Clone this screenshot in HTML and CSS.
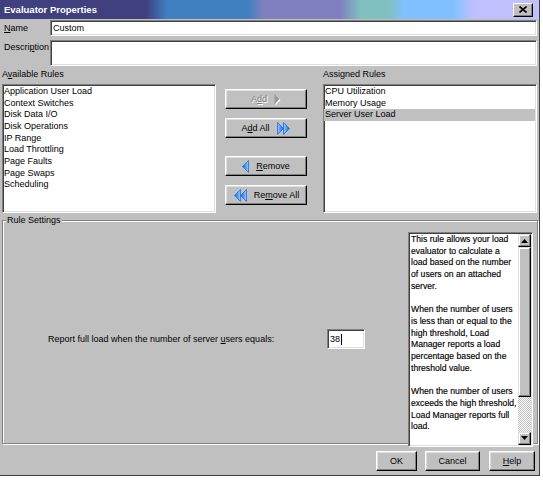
FILE: index.html
```html
<!DOCTYPE html>
<html>
<head>
<meta charset="utf-8">
<link rel="stylesheet" href="styles.css">
</head>
<body>
<div class="window">
  <div class="titlebar">
    <span class="title">Evaluator Properties</span>
    <span class="close"><svg width="8" height="7" viewBox="0 0 8 7"><path d="M0.5 0.5 L7.5 6.5 M7.5 0.5 L0.5 6.5" stroke="#000" stroke-width="1.6"/></svg></span>
  </div>
  <div class="content">
    <div class="field-row name-row">
      <label class="lbl"><u>N</u>ame</label>
      <div class="field name-field">Custom</div>
    </div>
    <div class="field-row desc-row">
      <label class="lbl desc-lbl">Descri<u>p</u>tion</label>
      <div class="field desc-field"></div>
    </div>
    <div class="rules">
      <div class="col-label">A<u>v</u>ailable Rules</div>
      <div></div>
      <div class="col-label">Assigned Rules</div>
      <ul class="list">
        <li>Application User Load</li>
        <li>Context Switches</li>
        <li>Disk Data I/O</li>
        <li>Disk Operations</li>
        <li>IP Range</li>
        <li>Load Throttling</li>
        <li>Page Faults</li>
        <li>Page Swaps</li>
        <li>Scheduling</li>
      </ul>
      <div class="btns">
        <div class="btn disabled"><span>A<u>d</u>d</span>
          <svg class="ico" width="7" height="13" viewBox="0 0 7 13"><polygon points="1.5,1.5 6.5,7 1.5,12.5" fill="#fff"/><polygon points="0.5,0.5 5.5,6 0.5,11.5" fill="#9a9a9a"/></svg>
        </div>
        <div class="btn gap-s"><span>A<u>d</u>d All</span>
          <svg class="ico" width="14" height="13" viewBox="0 0 14 13"><defs><linearGradient id="g1" x1="0" y1="0" x2="1" y2="0"><stop offset="0" stop-color="#8cd0ff"/><stop offset="1" stop-color="#1060e0"/></linearGradient></defs><polygon points="0.5,0.5 6.5,6.5 0.5,12.5" fill="url(#g1)" stroke="#2a68d0" stroke-width="0.8"/><polygon points="6.5,0.5 12.5,6.5 6.5,12.5" fill="url(#g1)" stroke="#2a68d0" stroke-width="0.8"/></svg>
        </div>
        <div class="btn gap-l">
          <svg class="ico-l" width="7" height="13" viewBox="0 0 7 13"><defs><linearGradient id="g2" x1="1" y1="0" x2="0" y2="0"><stop offset="0" stop-color="#8cd0ff"/><stop offset="1" stop-color="#1060e0"/></linearGradient></defs><polygon points="6.5,0.5 0.5,6.5 6.5,12.5" fill="url(#g2)" stroke="#2a68d0" stroke-width="0.8"/></svg>
          <span><u>R</u>emove</span>
        </div>
        <div class="btn gap-s">
          <svg class="ico-l" width="14" height="13" viewBox="0 0 14 13"><defs><linearGradient id="g3" x1="1" y1="0" x2="0" y2="0"><stop offset="0" stop-color="#8cd0ff"/><stop offset="1" stop-color="#1060e0"/></linearGradient></defs><polygon points="13.5,0.5 7.5,6.5 13.5,12.5" fill="url(#g3)" stroke="#2a68d0" stroke-width="0.8"/><polygon points="7.5,0.5 1.5,6.5 7.5,12.5" fill="url(#g3)" stroke="#2a68d0" stroke-width="0.8"/></svg>
          <span>Re<u>m</u>ove All</span>
        </div>
      </div>
      <ul class="list">
        <li>CPU Utilization</li>
        <li>Memory Usage</li>
        <li class="sel">Server User Load</li>
      </ul>
    </div>
    <div class="group">
      <div class="group-label">Rule Settings</div>
      <div class="group-body">
        <div class="settings-left">
          <span class="report">Report full load when the number of server <u>u</u>sers equals:</span>
          <div class="field num-field">38<span class="caret"></span></div>
        </div>
        <div class="desc-panel">
          <div class="desc-text">
            <p>This rule allows your load evaluator to calculate a load based on the number of users on an attached server.</p>
            <p>When the number of users is less than or equal to the high threshold, Load Manager reports a load percentage based on the threshold value.</p>
            <p>When the number of users exceeds the high threshold, Load Manager reports full load.</p>
          </div>
          <div class="scrollbar">
            <div class="sb-btn"><svg width="7" height="4" viewBox="0 0 7 4"><polygon points="3.5,0 7,4 0,4" fill="#000"/></svg></div>
            <div class="sb-thumb"></div>
            <div class="sb-track"></div>
            <div class="sb-btn"><svg width="7" height="4" viewBox="0 0 7 4"><polygon points="0,0 7,0 3.5,4" fill="#000"/></svg></div>
          </div>
        </div>
      </div>
    </div>
    <div class="footer">
      <div class="btn ok">OK</div>
      <div class="btn cancel">Cancel</div>
      <div class="btn help"><u>H</u>elp</div>
    </div>
  </div>
</div>
</body>
</html>
```
FILE: styles.css
```css
body {
  margin: 0;
  background: #fff;
  font-family: "Liberation Sans", Arial, sans-serif;
  font-size: 9px;
  color: #000;
}
.window {
  width: 540px;
  height: 476px;
  box-sizing: border-box;
  background: #c0c0c0;
  border-right: 1px solid #404040;
  border-bottom: 1px solid #404040;
  display: flex;
  flex-direction: column;
}
.titlebar {
  height: 19px;
  flex: none;
  display: flex;
  align-items: center;
  justify-content: space-between;
  padding: 0 6px 0 4px;
  background: linear-gradient(to right,
    #40407f 0%, #40407f 27%,
    #4080c0 31%, #4080c0 46%,
    #8080c0 49%, #8080c0 63%,
    #80c0c0 67%, #80c0c0 72%,
    #80c0ff 75%, #80c0ff 84%,
    #c0c0ff 88%, #c0c0ff 100%);
  color: #fff;
  font-weight: bold;
  font-size: 9.5px;
}
.close {
  width: 20px;
  height: 14px;
  box-sizing: border-box;
  background: #c0c0c0;
  border: 1px solid;
  border-color: #fff #000 #000 #fff;
  box-shadow: inset -1px -1px #808080;
  display: flex;
  align-items: center;
  justify-content: center;
}
.content {
  flex: 1;
  display: flex;
  flex-direction: column;
  padding: 1px 1px 0 2px;
}
.field-row {
  display: flex;
}
.lbl {
  width: 48px;
  box-sizing: border-box;
  padding-left: 2px;
  line-height: 11px;
}
.name-row {
  height: 16px;
  align-items: center;
}
.desc-row {
  margin-top: 4px;
  height: 26px;
}
.desc-lbl {
  padding-top: 2px;
}
.field {
  background: #fff;
  box-sizing: border-box;
  border: 1px solid;
  border-color: #808080 #fff #fff #808080;
  box-shadow: inset 1px 1px #404040, inset -1px -1px #dfdfdf;
}
.name-field {
  width: 487px;
  height: 16px;
  padding-left: 2px;
  line-height: 14px;
}
.desc-field {
  width: 487px;
  height: 26px;
}
.rules {
  margin-top: 3px;
  display: grid;
  grid-template-columns: 214px 107px 214px;
  grid-template-rows: 15px 129px;
}
.col-label {
  line-height: 11px;
}
.list {
  margin: 0;
  padding: 1px 0 0 1px;
  list-style: none;
  background: #fff;
  box-sizing: border-box;
  border: 1px solid;
  border-color: #808080 #fff #fff #808080;
  box-shadow: inset 1px 1px #404040, inset -1px -1px #dfdfdf;
  line-height: 11.67px;
}
.list li {
  white-space: nowrap;
}
.list .sel {
  background: #c0c0c0;
  margin-left: -1px;
  padding-left: 1px;
  margin-right: 1px;
}
.btns {
  display: flex;
  flex-direction: column;
  padding: 5px 0 0 9px;
}
.btn {
  height: 20px;
  box-sizing: border-box;
  border: 1px solid;
  border-color: #fff #000 #000 #fff;
  box-shadow: inset -1px -1px #808080, inset 1px 1px #dfdfdf;
  background: #c0c0c0;
  display: flex;
  align-items: center;
  justify-content: center;
  gap: 7px;
  line-height: 11px;
}
.btns .btn {
  width: 82px;
}
.btns .gap-s {
  margin-top: 9px;
}
.btns .gap-l {
  margin-top: 18px;
}
.btn.disabled {
  color: #808080;
  text-shadow: 1px 1px 0 #fff;
}
.group {
  margin-top: 7px;
  height: 224px;
  box-sizing: border-box;
  border: 1px solid #808080;
  box-shadow: inset 1px 1px #fff, 1px 1px #fff;
  display: flex;
  flex-direction: column;
}
.group-label {
  margin: -6px 0 0 3px;
  padding: 0 1px;
  line-height: 11px;
  background: #c0c0c0;
  align-self: flex-start;
}
.group-body {
  flex: 1;
  display: flex;
  padding: 6px 0 2px 0;
}
.settings-left {
  flex: 1;
  display: flex;
  align-items: center;
  padding-left: 45px;
}
.report {
  width: 279px;
  flex: none;
  line-height: 11px;
}
.num-field {
  width: 38px;
  height: 20px;
  padding-left: 2px;
  line-height: 18px;
  display: flex;
  align-items: center;
}
.caret {
  display: inline-block;
  width: 1px;
  height: 11px;
  background: #000;
  margin-left: 1px;
}
.desc-panel {
  width: 125px;
  flex: none;
  margin-right: 4px;
  box-sizing: border-box;
  background: #fff;
  border: 1px solid;
  border-color: #808080 #fff #fff #808080;
  box-shadow: inset 1px 1px #404040, inset -1px -1px #dfdfdf;
  padding: 1px;
  display: flex;
}
.desc-text {
  flex: 1;
  padding-left: 1px;
  line-height: 11.7px;
  overflow: hidden;
  font-size: 8.65px;
  -webkit-text-stroke: 0.15px #000;
}
.desc-text p {
  margin: 0 0 11.7px 0;
}
.scrollbar {
  width: 13px;
  flex: none;
  display: flex;
  flex-direction: column;
}
.sb-btn {
  height: 13px;
  flex: none;
  box-sizing: border-box;
  border: 1px solid;
  border-color: #dfdfdf #000 #000 #dfdfdf;
  box-shadow: inset -1px -1px #808080, inset 1px 1px #fff;
  background: #c0c0c0;
  display: flex;
  align-items: center;
  justify-content: center;
}
.sb-thumb {
  height: 150px;
  flex: none;
  box-sizing: border-box;
  border: 1px solid;
  border-color: #dfdfdf #000 #000 #dfdfdf;
  box-shadow: inset -1px -1px #808080, inset 1px 1px #fff;
  background: #c0c0c0;
}
.sb-track {
  flex: 1;
  background: repeating-conic-gradient(#c0c0c0 0 25%, #fff 0 50%) 0 0 / 2px 2px;
}
.footer {
  flex: 1;
  display: flex;
  justify-content: flex-end;
  align-items: flex-start;
  padding: 7px 3px 0 0;
}
.footer .ok {
  width: 41px;
}
.footer .cancel {
  width: 55px;
  margin-left: 8px;
}
.footer .help {
  width: 46px;
  margin-left: 9px;
  display: block;
  text-align: center;
  line-height: 18px;
}
```
